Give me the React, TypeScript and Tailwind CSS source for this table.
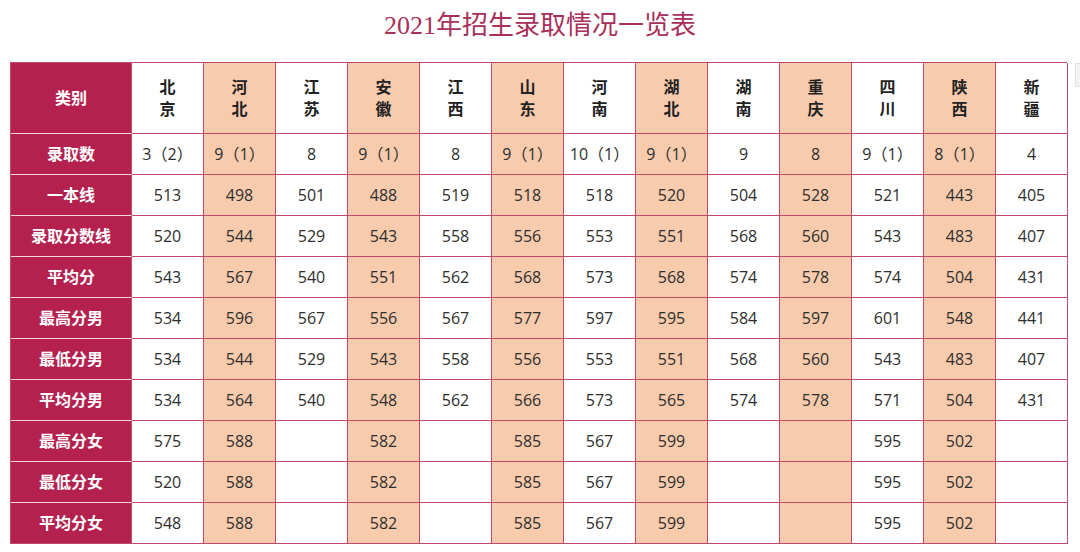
import React from "react";

const provinces = ["北京", "河北", "江苏", "安徽", "江西", "山东", "河南", "湖北", "湖南", "重庆", "四川", "陕西", "新疆"];

const rows: [string, string[]][] = [
  ["录取数", ["3（2）", "9（1）", "8", "9（1）", "8", "9（1）", "10（1）", "9（1）", "9", "8", "9（1）", "8（1）", "4"]],
  ["一本线", ["513", "498", "501", "488", "519", "518", "518", "520", "504", "528", "521", "443", "405"]],
  ["录取分数线", ["520", "544", "529", "543", "558", "556", "553", "551", "568", "560", "543", "483", "407"]],
  ["平均分", ["543", "567", "540", "551", "562", "568", "573", "568", "574", "578", "574", "504", "431"]],
  ["最高分男", ["534", "596", "567", "556", "567", "577", "597", "595", "584", "597", "601", "548", "441"]],
  ["最低分男", ["534", "544", "529", "543", "558", "556", "553", "551", "568", "560", "543", "483", "407"]],
  ["平均分男", ["534", "564", "540", "548", "562", "566", "573", "565", "574", "578", "571", "504", "431"]],
  ["最高分女", ["575", "588", "", "582", "", "585", "567", "599", "", "", "595", "502", ""]],
  ["最低分女", ["520", "588", "", "582", "", "585", "567", "599", "", "", "595", "502", ""]],
  ["平均分女", ["548", "588", "", "582", "", "585", "567", "599", "", "", "595", "502", ""]],
];

const font = { fontFamily: '"Open Sans", "Noto Sans CJK SC", sans-serif' };

export default function App() {
  return (
    <div className="relative w-[1080px] h-[552px] bg-white overflow-hidden" style={font}>
      {/* TITLE */}
      <div className="h-[62px] flex justify-center pt-[8px]">
        <h1
          className="text-[26px] leading-[36px] text-[#a8305a]"
          style={{ fontFamily: '"Liberation Serif", "Noto Sans CJK SC", serif' }}
        >
          2021年招生录取情况一览表
        </h1>
      </div>

      {/* TABLE */}
      <div className="ml-[10px] w-[1057px] grid grid-cols-[121px_repeat(13,72px)] border-l border-t border-[#c04a68]">
        <div className="h-[71px] bg-[#b5214f] text-white font-bold text-[16px] flex items-center justify-center border-r border-b border-r-[#c04a68] border-b-[#f3d4dc]">
          类别
        </div>
        {provinces.map((p, i) => (
          <div
            key={p}
            className={`h-[71px] flex flex-col items-center justify-center font-bold text-[16px] leading-[22px] text-[#222] border-r border-b border-[#c04a68] ${i % 2 === 1 ? "bg-[#f8cbad]" : "bg-white"}`}
          >
            <span>{p[0]}</span>
            <span>{p[1]}</span>
          </div>
        ))}

        {rows.map(([label, vals], r) => (
          <React.Fragment key={label}>
            <div
              className={`h-[41px] bg-[#b5214f] text-white font-bold text-[16px] flex items-center justify-center border-r border-b border-r-[#c04a68] ${r === rows.length - 1 ? "border-b-[#c04a68]" : "border-b-[#f3d4dc]"}`}
            >
              {label}
            </div>
            {vals.map((v, i) => (
              <div
                key={i}
                className={`h-[41px] flex items-center justify-center text-[16px] text-[#2e2e2e] border-r border-b border-[#c04a68] ${i % 2 === 1 ? "bg-[#f8cbad]" : "bg-white"}`}
              >
                {v}
              </div>
            ))}
          </React.Fragment>
        ))}
      </div>

      {/* scroll hint at right edge */}
      <div className="absolute left-[1075px] top-[63px] w-[8px] h-[24px] bg-[#f4f4f4] border border-[#e2e2e2]" />
    </div>
  );
}
